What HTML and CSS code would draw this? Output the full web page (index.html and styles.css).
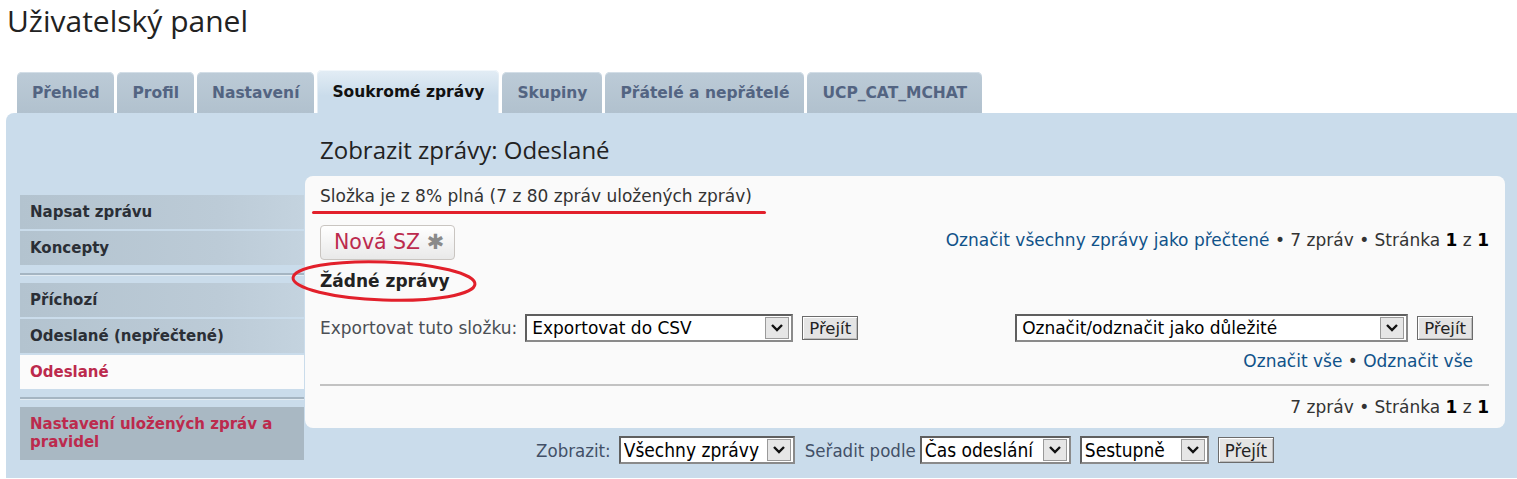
FILE: index.html
```html
<!DOCTYPE html>
<html lang="cs">
<head>
  <meta charset="UTF-8" />
  <title>Uživatelský panel</title>
  <link rel="stylesheet" href="styles.css">
</head>
<body>
  <div class="page">
    <h1 class="page-title">Uživatelský panel</h1>

    <ul class="tabs">
      <li class="tab"><a href="#">Přehled</a></li>
      <li class="tab"><a href="#">Profil</a></li>
      <li class="tab"><a href="#">Nastavení</a></li>
      <li class="tab active"><a href="#">Soukromé zprávy</a></li>
      <li class="tab"><a href="#">Skupiny</a></li>
      <li class="tab"><a href="#">Přátelé a nepřátelé</a></li>
      <li class="tab"><a href="#">UCP_CAT_MCHAT</a></li>
    </ul>

    <div class="panel">
      <div class="side">
        <ul class="menu">
          <li><a href="#">Napsat zprávu</a></li>
          <li><a href="#">Koncepty</a></li>
        </ul>
        <ul class="menu">
          <li><a href="#">Příchozí</a></li>
          <li><a href="#">Odeslané (nepřečtené)</a></li>
          <li class="current"><a href="#">Odeslané</a></li>
        </ul>
        <ul class="menu">
          <li class="dark"><a href="#">Nastavení uložených zpráv a pravidel</a></li>
        </ul>
      </div>

      <div class="main">
        <h2 class="main-title">Zobrazit zprávy: Odeslané</h2>

        <div class="box">
          <p class="folder-info">Složka je z 8% plná (7 z 80 zpráv uložených zpráv)</p>
          <span class="mark-line"></span>

          <div class="action-row">
            <a class="new-pm" href="#">Nová SZ <span class="star">✱</span></a>
            <div class="pagination">
              <a href="#">Označit všechny zprávy jako přečtené</a> • 7 zpráv • Stránka <strong>1</strong> z <strong>1</strong>
            </div>
          </div>

          <p class="empty">Žádné zprávy</p>
          <svg class="mark-circle" width="190" height="46" viewBox="0 0 190 46">
            <ellipse cx="95" cy="23" rx="91" ry="19" fill="none" stroke="#e2202b" stroke-width="3" transform="rotate(2 95 23)"/>
          </svg>

          <div class="tools-row">
            <div class="export">
              <label>Exportovat tuto složku:</label>
              <div class="dropdown w-export">
                <select><option>Exportovat do CSV</option></select>
                <span class="arrow"><svg width="14" height="10" viewBox="0 0 14 10"><path d="M2 2 L7 7 L12 2" fill="none" stroke="#111" stroke-width="2.4"/></svg></span>
              </div>
              <button class="go">Přejít</button>
            </div>
            <div class="mark-tools">
              <div class="mark-form">
                <div class="dropdown w-mark">
                  <select><option>Označit/odznačit jako důležité</option></select>
                  <span class="arrow"><svg width="14" height="10" viewBox="0 0 14 10"><path d="M2 2 L7 7 L12 2" fill="none" stroke="#111" stroke-width="2.4"/></svg></span>
                </div>
                <button class="go">Přejít</button>
              </div>
              <div class="mark-links">
                <a href="#">Označit vše</a> • <a href="#">Odznačit vše</a>
              </div>
            </div>
          </div>

          <hr class="divider">

          <div class="pagination bottom">7 zpráv • Stránka <strong>1</strong> z <strong>1</strong></div>
        </div>

        <div class="sort-row">
          <label>Zobrazit:</label>
          <div class="dropdown small w-show">
            <select><option>Všechny zprávy</option></select>
            <span class="arrow"><svg width="14" height="10" viewBox="0 0 14 10"><path d="M2 2 L7 7 L12 2" fill="none" stroke="#111" stroke-width="2.4"/></svg></span>
          </div>
          <label class="sort-label">Seřadit podle</label>
          <div class="dropdown small w-sort">
            <select><option>Čas odeslání</option></select>
            <span class="arrow"><svg width="14" height="10" viewBox="0 0 14 10"><path d="M2 2 L7 7 L12 2" fill="none" stroke="#111" stroke-width="2.4"/></svg></span>
          </div>
          <div class="dropdown small w-dir">
            <select><option>Sestupně</option></select>
            <span class="arrow"><svg width="14" height="10" viewBox="0 0 14 10"><path d="M2 2 L7 7 L12 2" fill="none" stroke="#111" stroke-width="2.4"/></svg></span>
          </div>
          <button class="go small">Přejít</button>
        </div>
      </div>
    </div>
  </div>
</body>
</html>
```

FILE: styles.css
```css
body {
  margin: 0;
  background: #fff;
  font-family: "DejaVu Sans", Verdana, sans-serif;
  font-size: 17px;
  color: #333;
}

a {
  text-decoration: none;
}

.page {
  padding-left: 6px;
  overflow: hidden;
}

.page-title {
  margin: 1px 0 29px 1px;
  font-family: "Open Sans", "Liberation Sans", sans-serif;
  font-size: 30px;
  font-weight: normal;
  line-height: 40px;
  color: #222;
}

/* tabs */
.tabs {
  display: flex;
  align-items: flex-end;
  gap: 3px;
  height: 43px;
  margin: 0 0 0 11px;
  padding: 0;
  list-style: none;
}

.tab {
  height: 41px;
  border-radius: 5px 5px 0 0;
  background: linear-gradient(#bccbd7, #b1c1ce);
  box-shadow: inset 0 1px 0 #d3dee7;
}

.tab a {
  display: block;
  padding: 0 15px;
  line-height: 43px;
  font-size: 15.5px;
  font-weight: bold;
  color: #536482;
}

.tab.active {
  height: 43px;
  background: linear-gradient(#e3edf5, #cadceb 60%);
  box-shadow: inset 0 1px 0 #f2f7fb, inset 1px 0 0 #e4edf4, inset -1px 0 0 #e4edf4;
}

.tab.active a {
  line-height: 45px;
  color: #111;
}

/* panel */
.panel {
  display: flex;
  height: 365px;
  background: #cadceb;
  border-radius: 8px 0 0 0;
  padding: 0 12px 0 14px;
}

.side {
  width: 284px;
  padding-top: 82px;
}

.menu {
  list-style: none;
  margin: 0;
  padding: 0;
}

.menu + .menu {
  margin-top: 8px;
  padding-top: 8px;
  border-top: 2px solid #a5b5c2;
  box-shadow: inset 0 1px 0 #e2ebf2;
}

.menu li {
  margin-bottom: 2px;
  background: linear-gradient(90deg, #b3c3cf, #bccbd7 70%, #c4d3df);
}

.menu li a {
  display: block;
  padding: 0 10px;
  line-height: 34px;
  font-size: 15px;
  font-weight: bold;
  color: #2b2f36;
}

.menu li.current {
  background: #fbfbfb;
}

.menu li.current a,
.menu li.dark a {
  color: #bc2a4d;
}

.menu li.dark {
  background: #a9b8c3;
}

.menu li.dark a {
  padding: 8px 10px 9px;
  line-height: 18px;
}

/* main */
.main {
  flex: 1;
  padding-left: 1px;
}

.main-title {
  margin: 22px 0 0 15px;
  height: 41px;
  font-family: "Open Sans", "Liberation Sans", sans-serif;
  font-size: 24px;
  font-weight: normal;
  line-height: 30px;
  color: #222;
}

.box {
  position: relative;
  background: #fafafa;
  border-radius: 8px;
  padding: 10px 16px 11px 15px;
}

.folder-info {
  margin: 0;
  line-height: 20px;
}

.mark-line {
  position: absolute;
  left: 7px;
  top: 35px;
  width: 454px;
  height: 3px;
  border-radius: 2px;
  background: #e2202b;
}

.action-row {
  display: flex;
  justify-content: space-between;
  align-items: center;
  margin-top: 19px;
}

.new-pm {
  display: inline-block;
  height: 33px;
  padding: 0 10px 0 13px;
  border: 1px solid #c9c5c1;
  border-radius: 4px;
  background: linear-gradient(#fff, #e9e9e9);
  line-height: 33px;
  font-size: 20.5px;
  color: #bc2a4d;
}

.star {
  color: #8a8a8a;
  font-size: 21px;
}

.pagination {
  line-height: 20px;
  margin-top: -6px;
}

.pagination a,
.mark-links a {
  color: #105289;
}

.pagination strong {
  color: #000;
}

.empty {
  margin: 11px 0 0;
  line-height: 20px;
  font-weight: bold;
  color: #222;
}

.mark-circle {
  position: absolute;
  left: -16px;
  top: 82px;
}

.tools-row {
  display: flex;
  justify-content: space-between;
  align-items: flex-start;
  margin-top: 23px;
}

.export,
.mark-form {
  display: flex;
  align-items: center;
}

.export label {
  color: #4b4f55;
  margin-right: 8px;
}

.mark-tools {
  margin-right: 16px;
}

.mark-links {
  margin-top: 9px;
  text-align: right;
  line-height: 20px;
}

.dropdown {
  display: flex;
  align-items: center;
  height: 28px;
  box-sizing: border-box;
  border: 2px solid;
  border-color: #5f5f5f #8a8a8a #8a8a8a #5f5f5f;
  background: #fff;
}

.dropdown select {
  flex: 1;
  min-width: 0;
  height: 100%;
  border: none;
  padding: 0 5px;
  appearance: none;
  -webkit-appearance: none;
  background: transparent;
  font-family: "DejaVu Sans", sans-serif;
  font-size: 17px;
  color: #000;
  outline: none;
}

.dropdown .arrow {
  display: flex;
  align-items: center;
  justify-content: center;
  width: 22px;
  height: 20px;
  margin-right: 2px;
  border: 1px solid #9a9a9a;
  background: #e6e6e6;
}

.w-export {
  width: 268px;
}

.w-mark {
  width: 393px;
}

.go {
  height: 24px;
  margin-left: 9px;
  padding: 0 6px;
  border: 1px solid #6b6b6b;
  box-shadow: inset 1px 1px 0 #fff, inset -1px -1px 0 #bdbdbd;
  background: #e4e4e4;
  font-family: "DejaVu Sans", sans-serif;
  font-size: 16.5px;
  color: #222;
}

.divider {
  margin: 13px 0 0;
  border: none;
  border-top: 2px solid #c2c2c2;
}

.pagination.bottom {
  margin-top: 11px;
  text-align: right;
}

/* sort row */
.sort-row {
  display: flex;
  justify-content: center;
  align-items: center;
  margin-top: 8px;
  font-family: "DejaVu Sans Condensed", "DejaVu Sans", sans-serif;
  font-stretch: condensed;
  font-size: 18.5px;
  color: #425067;
}

.sort-row label {
  margin-right: 8px;
}

.sort-row .sort-label {
  margin-left: 10px;
  margin-right: 4px;
}

.dropdown.small select {
  font-family: "DejaVu Sans Condensed", "DejaVu Sans", sans-serif;
  font-stretch: condensed;
  font-size: 19px;
  padding: 0 3px;
}

.w-show {
  width: 176px;
}

.w-sort {
  width: 151px;
}

.w-dir {
  width: 129px;
  margin-left: 9px;
}

.go.small {
  height: 26px;
  font-family: "DejaVu Sans Condensed", "DejaVu Sans", sans-serif;
  font-stretch: condensed;
  font-size: 18.5px;
}
```
